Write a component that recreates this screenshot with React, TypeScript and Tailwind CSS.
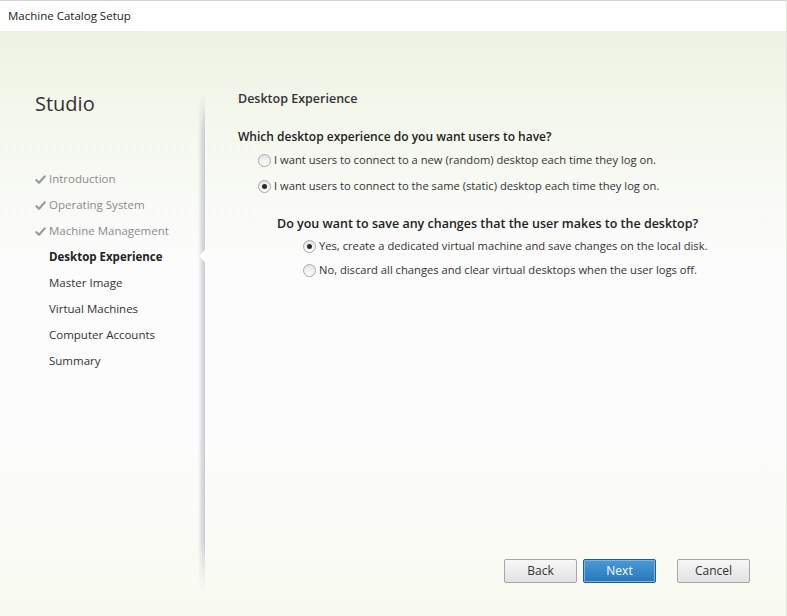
import { ReactNode } from "react";

const steps = [
  { label: "Introduction", done: true },
  { label: "Operating System", done: true },
  { label: "Machine Management", done: true },
  { label: "Desktop Experience", current: true },
  { label: "Master Image" },
  { label: "Virtual Machines" },
  { label: "Computer Accounts" },
  { label: "Summary" },
];

const Tick = () => (
  <svg viewBox="0 0 12 12" className="w-[11px] h-[11px] mr-[3px]">
    <path d="M1.5 6.8 L4.4 9.6 L10.6 2.6" fill="none" stroke="#999" strokeWidth="2.4" strokeLinecap="round" strokeLinejoin="round" />
  </svg>
);

const Radio = ({ checked, tall, children }: { checked?: boolean; tall?: boolean; children: ReactNode }) => (
  <div className={`flex items-center ${tall ? "h-[26px]" : "h-[24px]"}`}>
    <span className="w-[13px] h-[13px] rounded-full border border-[#a8a8a8] bg-[linear-gradient(to_bottom,#e4e4e4,#ffffff)] flex items-center justify-center mr-[3px] shrink-0">
      {checked && <span className="w-[5px] h-[5px] rounded-full bg-[#2a2a2a]" />}
    </span>
    <span className="text-[11.2px] text-[#333]">{children}</span>
  </div>
);

const Button = ({ primary, children }: { primary?: boolean; children: ReactNode }) => (
  <button
    className={`w-[73px] h-[24px] text-[12px] rounded-[2px] border ${
      primary
        ? "border-[#1c5f98] bg-[linear-gradient(to_bottom,#4a9ad6,#2776bb)] text-white shadow-[0_0_0_1px_#7fb4e0_inset]"
        : "border-[#a6a6a6] bg-[linear-gradient(to_bottom,#f7f7f7,#e2e2e2)] text-[#333]"
    }`}
  >
    {children}
  </button>
);

export default function App() {
  return (
    <div className="w-[787px] h-[616px] flex flex-col overflow-hidden font-['Open_Sans',sans-serif] border-r border-[#e2e6dc]">
      <div className="h-[31px] shrink-0 bg-white border-t border-[#d4d4d4] flex items-center pl-[8px] text-[11.5px] text-[#222]">
        Machine Catalog Setup
      </div>
      <div className="flex-1 flex bg-[linear-gradient(to_bottom,#edf3e3_0%,#f5f8ef_18%,#fcfcfc_40%,#fcfcfc_70%,#f8faf0_100%)]">
        <div className="w-[198px] shrink-0 pl-[35px] pt-[59px]">
          <div className="text-[20px] leading-[27px] text-[#333] font-medium">Studio</div>
          <div className="mt-[49px] flex flex-col">
            {steps.map((s) => (
              <div key={s.label} className="h-[26px] flex items-center">
                {s.done ? <Tick /> : <span className="w-[14px]" />}
                <span
                  className={`text-[11.5px] ${
                    s.done ? "text-[#8c8c8c]" : s.current ? "text-[#222] font-bold" : "text-[#333]"
                  }`}
                >
                  {s.label}
                </span>
              </div>
            ))}
          </div>
        </div>
        <div className="relative w-[7px] shrink-0 mt-[64px] mb-[26px] bg-[linear-gradient(to_right,rgba(210,213,218,0),#d7dade_60%,#c9ccd1)] [mask-image:linear-gradient(to_bottom,transparent,black_7%,black_90%,transparent)]">
          <span className="absolute right-0 top-[155px] w-0 h-0 border-y-[6px] border-y-transparent border-r-[6px] border-r-white" />
        </div>
        <div className="flex-1 flex flex-col pl-[33px] pt-[59px] pb-[33px] pr-[36px]">
          <div className="text-[12.5px] leading-[18px] font-semibold text-[#333]">Desktop Experience</div>
          <div className="mt-[20px] text-[12px] leading-[18px] font-semibold text-[#222]">
            Which desktop experience do you want users to have?
          </div>
          <div className="pl-[20px] mt-[1px]">
            <Radio tall>I want users to connect to a new (random) desktop each time they log on.</Radio>
            <Radio tall checked>I want users to connect to the same (static) desktop each time they log on.</Radio>
          </div>
          <div className="pl-[39px] mt-[16px]">
            <div className="text-[12.5px] leading-[18px] font-semibold text-[#222]">
              Do you want to save any changes that the user makes to the desktop?
            </div>
            <div className="pl-[26px] mt-[1px]">
              <Radio checked>Yes, create a dedicated virtual machine and save changes on the local disk.</Radio>
              <Radio>No, discard all changes and clear virtual desktops when the user logs off.</Radio>
            </div>
          </div>
          <div className="flex-1" />
          <div className="flex justify-end">
            <Button>Back</Button>
            <span className="w-[6px]" />
            <Button primary>Next</Button>
            <span className="w-[21px]" />
            <Button>Cancel</Button>
          </div>
        </div>
      </div>
    </div>
  );
}
